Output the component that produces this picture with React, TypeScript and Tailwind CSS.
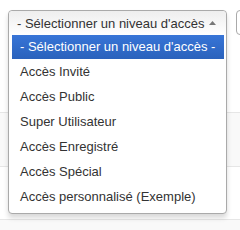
import React from "react";

const options = [
  "Accès Invité",
  "Accès Public",
  "Super Utilisateur",
  "Accès Enregistré",
  "Accès Spécial",
  "Accès personnalisé (Exemple)",
];

export default function App() {
  return (
    <div
      className="relative w-[240px] h-[230px] overflow-hidden bg-white text-[13px] text-[#333]"
      style={{ fontFamily: '"Liberation Sans", Arial, sans-serif' }}
    >
      {/* table rows behind the dropdown */}
      <div className="flex flex-col">
        <div className="h-[113px] border-b border-[#e6e6e6]" />
        <div className="h-[54px] border-b border-[#e6e6e6] bg-[#f9f9f9]" />
        <div className="h-[53px] border-b border-[#e6e6e6]" />
        <div className="h-[10px] bg-[#f9f9f9]" />
      </div>

      {/* neighbouring field, cut off at the right */}
      <div className="absolute left-[236px] top-[10px] h-[25px] w-[20px] rounded-[4px] border border-[#aaa] bg-white" />

      {/* chosen dropdown */}
      <div className="absolute left-[8px] top-[10px] w-[219px] rounded-[4px] border border-[#aaa] bg-white shadow-[0_4px_5px_rgba(0,0,0,0.15)]">
        <div className="flex h-[24px] items-center justify-between rounded-t-[4px] bg-gradient-to-b from-[#eee] to-white pl-[8px] pr-[10px]">
          <span className="whitespace-nowrap leading-none">- Sélectionner un niveau d'accès</span>
          <svg width="7" height="4" viewBox="0 0 7 4" className="mb-[1px]">
            <path d="M0 4 L3.5 0 L7 4 Z" fill="#777" />
          </svg>
        </div>
        <ul className="mr-[2px] mb-[4px] pl-[3px]">
          <li className="flex h-[24px] items-center whitespace-nowrap bg-gradient-to-b from-[#3875d7] to-[#2a62bc] pl-[8px] text-white">
            - Sélectionner un niveau d'accès -
          </li>
          {options.map((o) => (
            <li key={o} className="flex h-[25px] items-center whitespace-nowrap pl-[8px]">
              {o}
            </li>
          ))}
        </ul>
      </div>
    </div>
  );
}
